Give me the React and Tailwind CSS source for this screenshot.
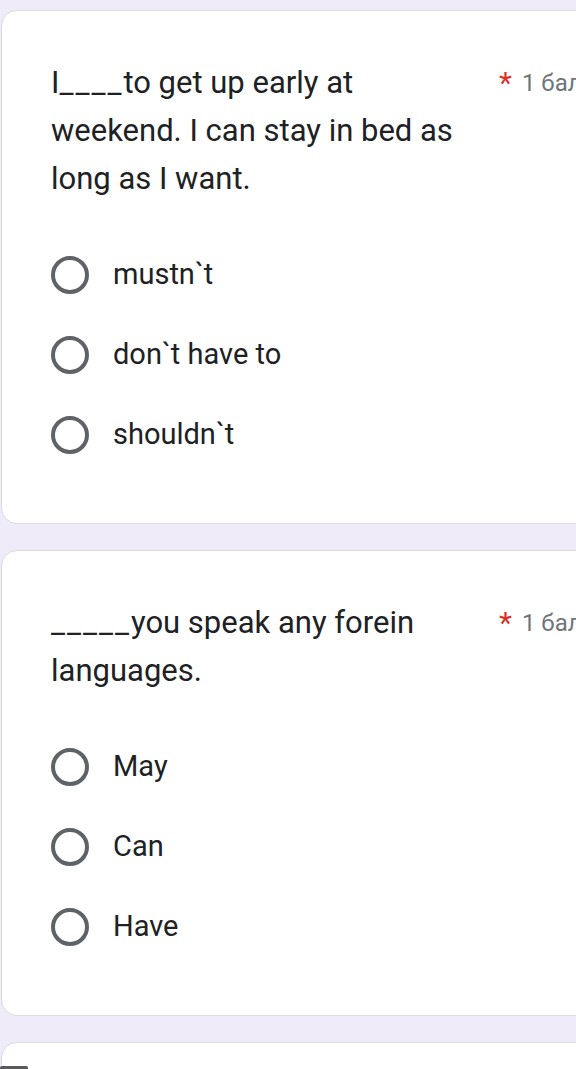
const questions = [
  {
    id: 1,
    lead: "I",
    blank: "____",
    title: "to get up early at weekend. I can stay in bed as long as I want.",
    options: ["mustn`t", "don`t have to", "shouldn`t"],
  },
  {
    id: 2,
    lead: "",
    blank: "_____",
    title: "you speak any forein languages.",
    options: ["May", "Can", "Have"],
  },
];

function Radio({ label }) {
  return (
    <label className="flex h-[80px] items-center">
      <span className="h-[38px] w-[38px] shrink-0 rounded-full border-[4px] border-[#5f6368]" />
      <span className="ml-[24px] text-[29px] text-[#202124]">{label}</span>
    </label>
  );
}

function QuestionCard({ question }) {
  return (
    <section className="ml-px w-[600px] rounded-[16px] border border-[#dadce0] bg-white pb-[48px] pl-[49px] pt-[48px]">
      <div className="flex items-start">
        <h2 className="w-[415px] text-[31px] leading-[48px] text-[#202124]">
          {question.lead}
          <span className="tracking-[2px]">{question.blank}</span>
          {question.title}
        </h2>
        <div className="ml-[33px] flex items-center whitespace-nowrap leading-[48px]">
          <span className="text-[30px] text-[#d93025]">*</span>
          <span className="ml-[10px] text-[24px] text-[#70757a]">1 балл</span>
        </div>
      </div>
      <div className="mt-[32px]">
        {question.options.map((option) => (
          <Radio key={option} label={option} />
        ))}
      </div>
    </section>
  );
}

export default function App() {
  return (
    <div className="relative h-[1069px] w-[576px] overflow-hidden bg-[#efebf8] pt-[10px] font-['Roboto',sans-serif]">
      <div className="flex flex-col gap-[26px]">
        {questions.map((question) => (
          <QuestionCard key={question.id} question={question} />
        ))}
        <section className="ml-px h-[60px] w-[600px] rounded-[16px] border border-[#dadce0] bg-white" />
      </div>
      <div className="absolute bottom-0 left-0 h-[3px] w-[28px] rounded-t-[2px] bg-[#5a5a5a]" />
    </div>
  );
}
